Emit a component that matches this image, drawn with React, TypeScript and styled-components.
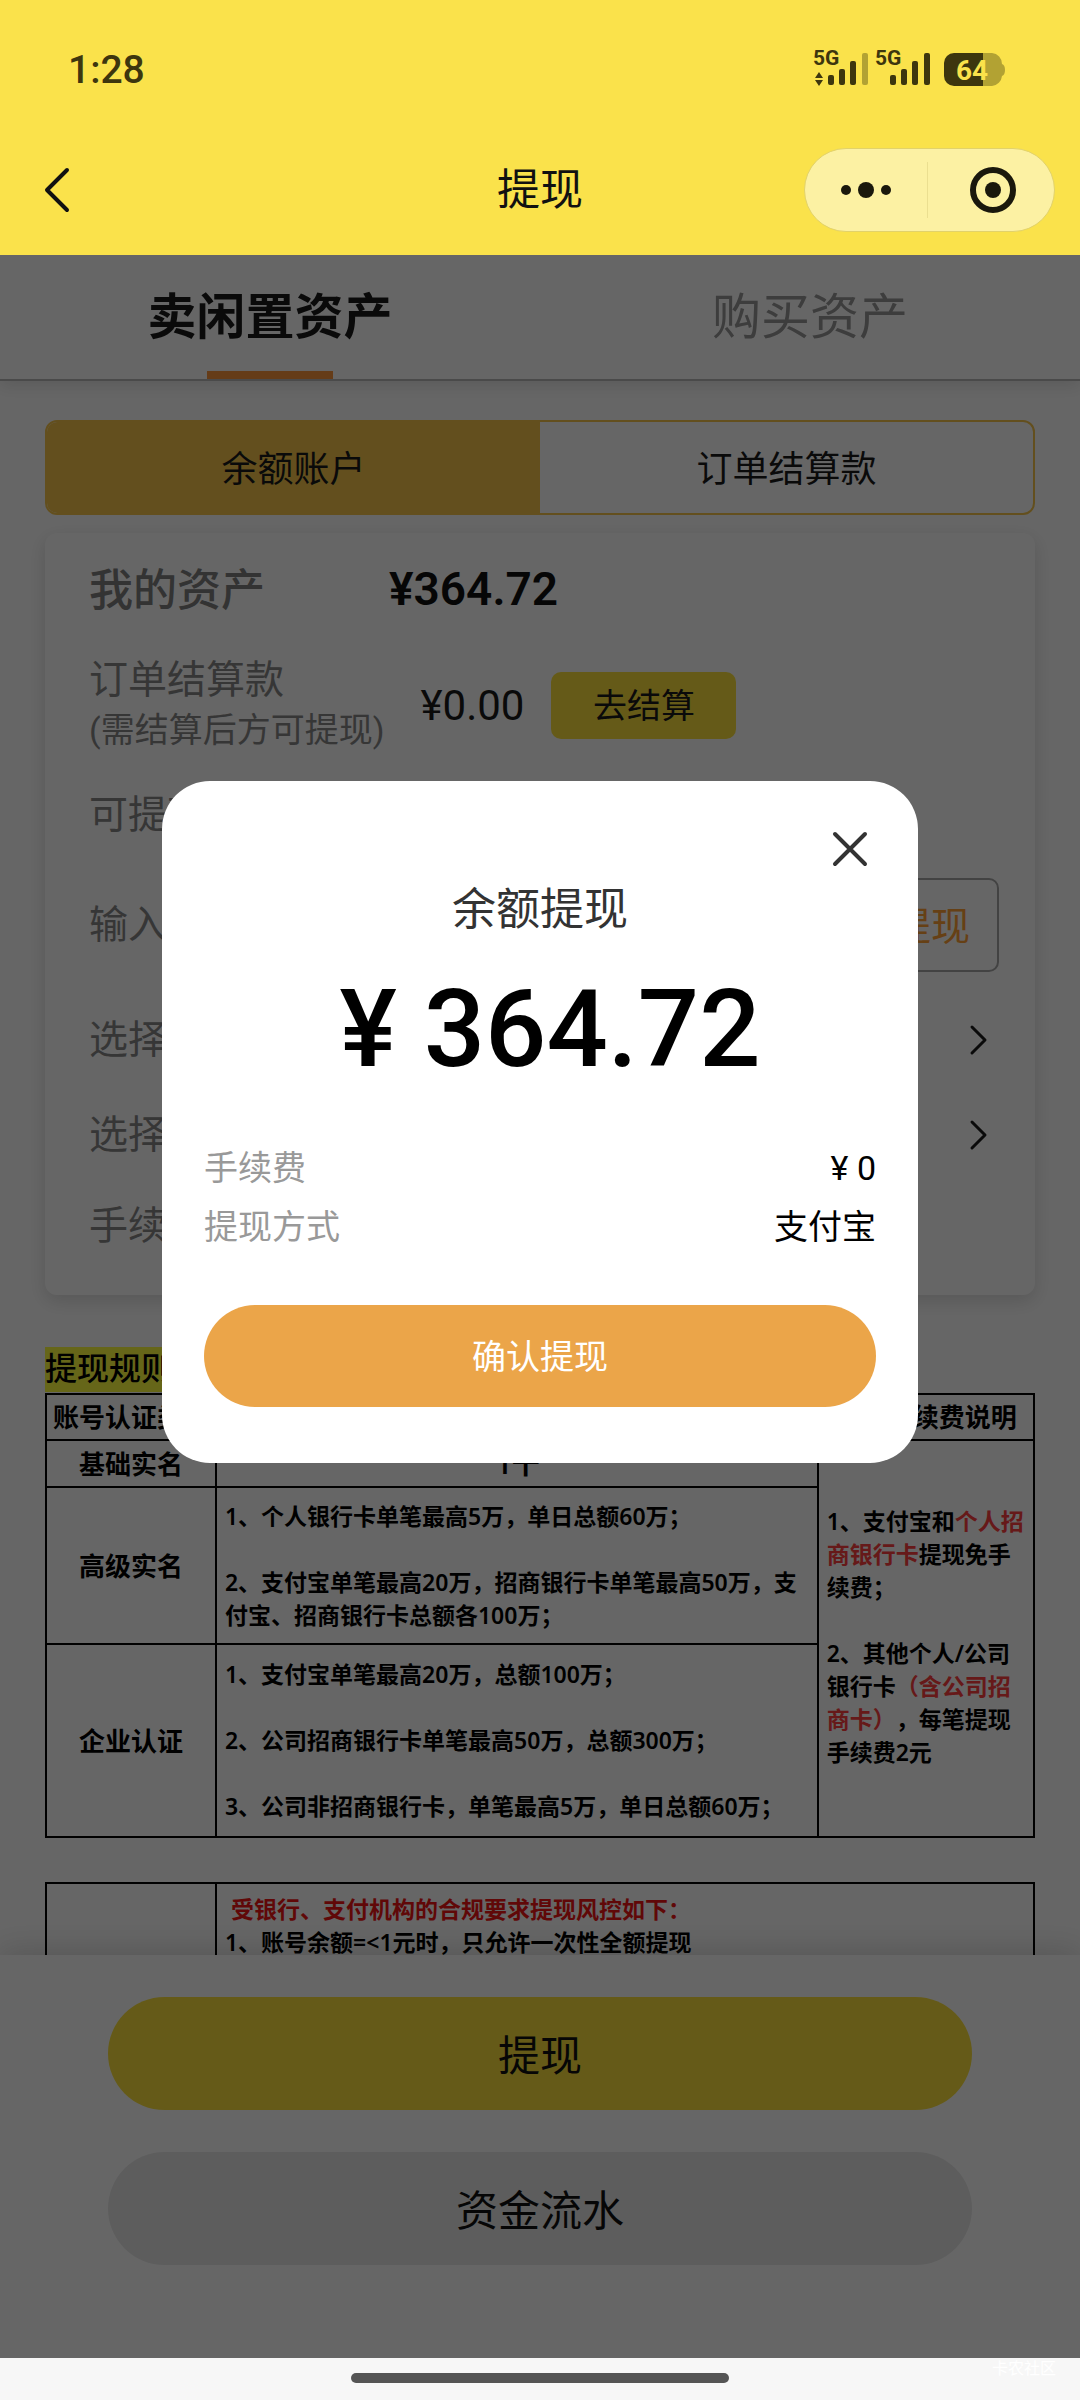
import React from "react";
import styled, { createGlobalStyle } from "styled-components";

const cjk = `"Noto Sans CJK SC", sans-serif`;

const GlobalStyle = createGlobalStyle`
  * { box-sizing: border-box; }
  body { margin: 0; font-family: Roboto, ${cjk}; color: #111; background: #fff; }
  button { font: inherit; color: inherit; border: 0; padding: 0; background: none; cursor: pointer; }
  p, h1, h2, dl, dd { margin: 0; font-weight: inherit; }
  svg { display: block; }
`;

const Screen = styled.div`
  display: flex;
  flex-direction: column;
  height: 100vh;
  overflow: hidden;
`;

/* ---------- header ---------- */

const Header = styled.header`
  flex: none;
  background: #fae24b;
`;

const StatusBar = styled.div`
  display: flex;
  justify-content: space-between;
  align-items: center;
  height: 124px;
  padding: 16px 74px 0 68px;
  color: #3d360e;
`;

const Clock = styled.time`
  font-size: 39px;
  line-height: 44px;
  font-weight: 500;
`;

const NavBar = styled.div`
  display: grid;
  grid-template-columns: 1fr auto 1fr;
  align-items: center;
  height: 131px;
  padding: 0 25px;
`;

const BackButton = styled.button`
  justify-self: start;
  padding-left: 10px;
`;

const NavTitle = styled.h1`
  font-size: 43px;
  line-height: 60px;
`;

const Capsule = styled.div`
  justify-self: end;
  display: flex;
  align-items: center;
  width: 251px;
  height: 84px;
  border: 1px solid #e2d26a;
  border-radius: 42px;
  background: #fcf1a3;
`;

const CapsuleButton = styled.button`
  flex: 1;
  display: flex;
  justify-content: center;
  align-items: center;
  height: 56px;
  & + & {
    padding-left: 4px;
    border-left: 1px solid #ebdf90;
  }
`;

/* ---------- page ---------- */

const Page = styled.div`
  position: relative;
  flex: 1;
  min-height: 0;
  display: flex;
  flex-direction: column;
`;

const Scroller = styled.main`
  flex: 1;
  min-height: 0;
  overflow: hidden;
`;

const Tabs = styled.div`
  display: grid;
  grid-template-columns: 1fr 1fr;
  height: 126px;
  border-bottom: 2px solid #b8b8b8;
  box-shadow: 0 4px 16px rgba(0, 0, 0, 0.12);
`;

const Tab = styled.button<{ $active?: boolean }>`
  position: relative;
  padding-bottom: 10px;
  font-size: 49px;
  font-weight: ${(p) => (p.$active ? 700 : 400)};
  color: ${(p) => (p.$active ? "#1a1a1a" : "#999")};
  &::after {
    content: "";
    display: ${(p) => (p.$active ? "block" : "none")};
    position: absolute;
    left: 50%;
    bottom: 0;
    width: 126px;
    height: 8px;
    transform: translateX(-50%);
    background: #fc963c;
  }
`;

const Content = styled.div`
  padding: 39px 45px 0;
`;

const Segments = styled.div`
  display: grid;
  grid-template-columns: 1fr 1fr;
  height: 95px;
  border: 2px solid #f7c64c;
  border-radius: 12px;
  overflow: hidden;
`;

const Segment = styled.button<{ $active?: boolean }>`
  padding-bottom: 4px;
  font-size: 36px;
  color: #1a1a1a;
  background: ${(p) => (p.$active ? "#f7c64c" : "transparent")};
`;

const Card = styled.section`
  margin-top: 18px;
  padding: 0 36px 18px 44px;
  border-radius: 12px;
  box-shadow: 0 6px 18px rgba(0, 0, 0, 0.14);
`;

const Row = styled.div<{ $height: number }>`
  display: flex;
  align-items: center;
  min-height: ${(p) => p.$height}px;
`;

const RowLink = styled.button<{ $height: number }>`
  display: flex;
  align-items: center;
  justify-content: space-between;
  width: 100%;
  min-height: ${(p) => p.$height}px;
  padding-right: 10px;
`;

const Label = styled.span`
  font-size: 39px;
  line-height: 50px;
  color: #888;
`;

const AssetLabel = styled.span`
  width: 300px;
  padding-bottom: 4px;
  font-size: 44px;
  font-weight: 500;
  color: #808080;
`;

const AssetValue = styled.strong`
  font-size: 46px;
  font-weight: 600;
  color: #111;
`;

const LabelStack = styled.div`
  display: flex;
  flex-direction: column;
  margin-right: 36px;
`;

const LabelNote = styled.span`
  font-size: 34px;
  line-height: 50px;
  color: #888;
`;

const PendingValue = styled.span`
  font-size: 42px;
  color: #1a1a1a;
`;

const SettleButton = styled.button`
  width: 185px;
  height: 67px;
  margin-left: 27px;
  padding-bottom: 4px;
  border-radius: 10px;
  font-size: 34px;
  color: #1a1a1a;
  background: #fce23c;
`;

const AllButton = styled.button`
  height: 94px;
  margin-left: auto;
  padding: 0 27px 4px;
  border: 2px solid #a8a8a8;
  border-radius: 10px;
  font-size: 39px;
  color: #ffa036;
`;

const RulesTitle = styled.h2`
  width: fit-content;
  margin-top: 52px;
  font-size: 32px;
  line-height: 45px;
  font-weight: 500;
  color: #000;
  background: #ffff40;
`;

const RulesTable = styled.table`
  width: 100%;
  margin-top: 1px;
  border-collapse: collapse;
  table-layout: fixed;
  font-family: "Noto Sans", ${cjk};
  text-spacing-trim: space-all;
  color: #000;
  & + & {
    margin-top: 44px;
  }
`;

const RulesRow = styled.tr<{ $height: number }>`
  height: ${(p) => p.$height}px;
`;

const HeadCell = styled.th`
  padding: 0;
  border: 2px solid #000;
  font-size: 26px;
  line-height: 36px;
  font-weight: 600;
  text-align: center;
  white-space: nowrap;
`;

const BodyCell = styled.td`
  padding: 0 6px 0 8px;
  border: 2px solid #000;
  font-size: 23px;
  line-height: 33px;
  font-weight: 600;
`;

const CenterCell = styled(BodyCell)`
  font-size: 28px;
  text-align: center;
`;

const FeeCell = styled(BodyCell)`
  padding-bottom: 3px;
`;

const RiskCell = styled(BodyCell)`
  padding-top: 9px;
  padding-bottom: 9px;
`;

const Note = styled.p`
  & + & {
    margin-top: 33px;
  }
`;

const Red = styled.span`
  color: #ff4040;
`;

const RedHeading = styled.p`
  padding-left: 6px;
  color: #f01414;
`;

const Actions = styled.footer`
  flex: none;
  position: relative;
  display: flex;
  flex-direction: column;
  align-items: center;
  gap: 42px;
  padding: 42px 0 93px;
  background: #fff;
  box-shadow: 0 -4px 30px rgba(0, 0, 0, 0.16);
`;

const ActionButton = styled.button<{ $primary?: boolean }>`
  width: 80%;
  height: 113px;
  padding-bottom: 2px;
  border-radius: 57px;
  font-size: 42px;
  color: #111;
  background: ${(p) => (p.$primary ? "#fce23c" : "#e9e9e9")};
`;

/* ---------- dialog ---------- */

const Mask = styled.div`
  position: absolute;
  inset: 0;
  display: flex;
  justify-content: center;
  align-items: flex-start;
  padding-top: 526px;
  background: rgba(0, 0, 0, 0.6);
`;

const Dialog = styled.section`
  display: flex;
  flex-direction: column;
  width: 70%;
  padding: 44px 42px 56px;
  border-radius: 48px;
  background: #fff;
`;

const CloseButton = styled.button`
  align-self: flex-end;
  margin-right: 2px;
`;

const DialogTitle = styled.h2`
  margin-top: 4px;
  font-size: 44px;
  line-height: 66px;
  text-align: center;
  color: #333;
`;

const Amount = styled.p`
  padding-left: 20px;
  margin-top: 21px;
  font-size: 108px;
  line-height: 130px;
  font-weight: 500;
  text-align: center;
  color: #000;
`;

const Details = styled.dl`
  margin-top: 45px;
`;

const Detail = styled.div`
  display: flex;
  justify-content: space-between;
  font-size: 34px;
  line-height: 59px;
`;

const DetailName = styled.dt`
  color: #999;
`;

const DetailValue = styled.dd`
  color: #000;
`;

const ConfirmButton = styled.button`
  height: 102px;
  margin-top: 48px;
  padding-bottom: 4px;
  border-radius: 51px;
  font-size: 34px;
  color: #fff;
  background: #eba549;
`;

/* ---------- system bar ---------- */

const SystemBar = styled.div`
  position: relative;
  flex: none;
  display: flex;
  justify-content: center;
  align-items: center;
  height: 42px;
  background: #f7f7f7;
`;

const Handle = styled.div`
  width: 35%;
  height: 10px;
  margin-bottom: 2px;
  border-radius: 5px;
  background: #555;
`;

const Watermark = styled.span`
  position: absolute;
  right: 24px;
  top: 0;
  font-size: 16px;
  line-height: 22px;
  color: #fff;
`;

const StatusIcons = () => (
  <svg width="192" height="42" viewBox="814 49 192 42" fill="#3d360e" overflow="visible" aria-label="信号与电量">
    <g fontFamily="Roboto, sans-serif" fontWeight="700" fontSize="21">
      <text x="813" y="65">5G</text>
      <text x="875" y="65">5G</text>
    </g>
    <path d="M819 72l4 6h-8zM819 86l-4-6h8z" />
    <rect x="828" y="75" width="6" height="10" rx="2" />
    <rect x="839" y="69" width="6" height="16" rx="2" />
    <rect x="850" y="61" width="6" height="24" rx="2" />
    <rect x="862" y="53" width="6" height="32" rx="2" fill="#b2a233" />
    <rect x="890" y="75" width="6" height="10" rx="2" />
    <rect x="901" y="69" width="6" height="16" rx="2" />
    <rect x="912" y="61" width="6" height="24" rx="2" />
    <rect x="924" y="53" width="6" height="32" rx="2" />
    <path d="M983 53h9a11 11 0 0 1 10 11q3 1 3 6t-3 6a11 11 0 0 1-10 10h-9z" fill="#b2a233" />
    <path d="M983 53v33h-29a10 10 0 0 1-10-10v-13a10 10 0 0 1 10-10z" />
    <text x="956" y="80" fontFamily="Roboto, sans-serif" fontWeight="700" fontSize="28" fill="#fae24b">64</text>
  </svg>
);

const Chevron = () => (
  <svg width="20" height="32" viewBox="0 0 20 32" fill="none" stroke="#1a1a1a" strokeWidth="3" strokeLinecap="round" strokeLinejoin="round">
    <path d="M3 3l13 13L3 29" />
  </svg>
);

export default function App() {
  return (
    <Screen>
      <GlobalStyle />
      <Header>
        <StatusBar>
          <Clock>1:28</Clock>
          <StatusIcons />
        </StatusBar>
        <NavBar>
          <BackButton aria-label="返回">
            <svg width="44" height="48" viewBox="0 0 44 48" fill="none" stroke="#111" strokeWidth="4" strokeLinecap="round" strokeLinejoin="round">
              <path d="M32 4L12 24l20 20" />
            </svg>
          </BackButton>
          <NavTitle>提现</NavTitle>
          <Capsule>
            <CapsuleButton aria-label="更多">
              <svg width="52" height="20" viewBox="0 0 52 20" fill="#1a180c">
                <circle cx="6" cy="10" r="5" />
                <circle cx="26" cy="10" r="8" />
                <circle cx="46" cy="10" r="5" />
              </svg>
            </CapsuleButton>
            <CapsuleButton aria-label="关闭小程序">
              <svg width="48" height="48" viewBox="0 0 48 48">
                <circle cx="24" cy="24" r="20" fill="none" stroke="#1a180c" strokeWidth="6" />
                <circle cx="24" cy="24" r="8" fill="#1a180c" />
              </svg>
            </CapsuleButton>
          </Capsule>
        </NavBar>
      </Header>

      <Page>
        <Scroller>
          <Tabs>
            <Tab $active>卖闲置资产</Tab>
            <Tab>购买资产</Tab>
          </Tabs>
          <Content>
            <Segments>
              <Segment $active>余额账户</Segment>
              <Segment>订单结算款</Segment>
            </Segments>

            <Card>
              <Row $height={112}>
                <AssetLabel>我的资产</AssetLabel>
                <AssetValue>¥364.72</AssetValue>
              </Row>
              <Row $height={120}>
                <LabelStack>
                  <Label>订单结算款</Label>
                  <LabelNote>(需结算后方可提现)</LabelNote>
                </LabelStack>
                <PendingValue>¥0.00</PendingValue>
                <SettleButton>去结算</SettleButton>
              </Row>
              <Row $height={100}>
                <Label>可提现</Label>
              </Row>
              <Row $height={120}>
                <Label>输入金额</Label>
                <AllButton>全部提现</AllButton>
              </Row>
              <RowLink $height={110}>
                <Label>选择方式</Label>
                <Chevron />
              </RowLink>
              <RowLink $height={80}>
                <Label>选择账户</Label>
                <Chevron />
              </RowLink>
              <Row $height={102}>
                <Label>手续费</Label>
              </Row>
            </Card>

            <RulesTitle>提现规则</RulesTitle>
            <RulesTable>
              <colgroup>
                <col width="17.2%" />
                <col width="60.9%" />
                <col width="21.9%" />
              </colgroup>
              <thead>
                <RulesRow $height={46}>
                  <HeadCell>账号认证类型</HeadCell>
                  <HeadCell>提现额度</HeadCell>
                  <HeadCell>提现手续费说明</HeadCell>
                </RulesRow>
              </thead>
              <tbody>
                <RulesRow $height={47}>
                  <HeadCell>基础实名</HeadCell>
                  <CenterCell>1千</CenterCell>
                  <FeeCell rowSpan={3}>
                    <Note>
                      1、支付宝和<Red>个人招商银行卡</Red>提现免手续费；
                    </Note>
                    <Note>
                      2、其他个人/公司银行卡<Red>（含公司招商卡）</Red>，每笔提现手续费2元
                    </Note>
                  </FeeCell>
                </RulesRow>
                <RulesRow $height={157}>
                  <HeadCell>高级实名</HeadCell>
                  <BodyCell>
                    <Note>1、个人银行卡单笔最高5万，单日总额60万；</Note>
                    <Note>2、支付宝单笔最高20万，招商银行卡单笔最高50万，支付宝、招商银行卡总额各100万；</Note>
                  </BodyCell>
                </RulesRow>
                <RulesRow $height={193}>
                  <HeadCell>企业认证</HeadCell>
                  <BodyCell>
                    <Note>1、支付宝单笔最高20万，总额100万；</Note>
                    <Note>2、公司招商银行卡单笔最高50万，总额300万；</Note>
                    <Note>3、公司非招商银行卡，单笔最高5万，单日总额60万；</Note>
                  </BodyCell>
                </RulesRow>
              </tbody>
            </RulesTable>
            <RulesTable>
              <colgroup>
                <col width="17.2%" />
                <col width="82.8%" />
              </colgroup>
              <tbody>
                <RulesRow $height={84}>
                  <HeadCell />
                  <RiskCell>
                    <RedHeading>受银行、支付机构的合规要求提现风控如下：</RedHeading>
                    <p>1、账号余额=&lt;1元时，只允许一次性全额提现</p>
                  </RiskCell>
                </RulesRow>
              </tbody>
            </RulesTable>
          </Content>
        </Scroller>

        <Actions>
          <ActionButton $primary>提现</ActionButton>
          <ActionButton>资金流水</ActionButton>
        </Actions>

        <Mask>
          <Dialog role="dialog" aria-modal="true" aria-labelledby="dialog-title">
            <CloseButton aria-label="关闭">
              <svg width="48" height="48" viewBox="0 0 48 48" fill="none" stroke="#333" strokeWidth="4" strokeLinecap="round">
                <path d="M9 9l30 30M39 9L9 39" />
              </svg>
            </CloseButton>
            <DialogTitle id="dialog-title">余额提现</DialogTitle>
            <Amount>¥ 364.72</Amount>
            <Details>
              <Detail>
                <DetailName>手续费</DetailName>
                <DetailValue>¥ 0</DetailValue>
              </Detail>
              <Detail>
                <DetailName>提现方式</DetailName>
                <DetailValue>支付宝</DetailValue>
              </Detail>
            </Details>
            <ConfirmButton>确认提现</ConfirmButton>
          </Dialog>
        </Mask>
      </Page>

      <SystemBar>
        <Handle />
        <Watermark>卡农社区</Watermark>
      </SystemBar>
    </Screen>
  );
}
